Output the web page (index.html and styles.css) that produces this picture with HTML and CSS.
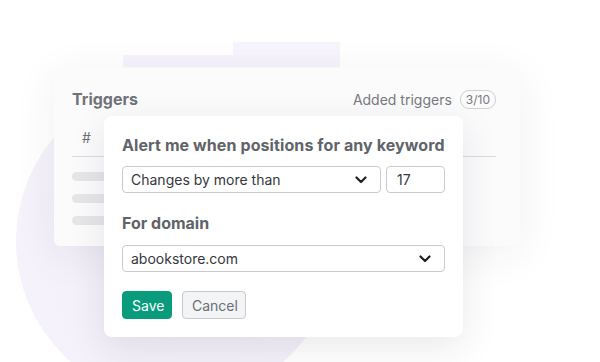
FILE: index.html
```html
<!DOCTYPE html>
<html lang="en">
<head>
<meta charset="utf-8">
<title>Triggers</title>
<link rel="stylesheet" href="styles.css">
</head>
<body>
<div class="stage">
  <div class="circle"></div>
  <div class="back-card">
    <div class="back-tab"></div>
    <div class="back-head"></div>
    <div class="back-body"></div>
  </div>
  <div class="triggers-card">
    <div class="tc-head">
      <span class="tc-title">Triggers</span>
      <span class="tc-added">Added triggers <span class="badge">3/10</span></span>
    </div>
    <div class="tc-cols"><span class="hash">#</span></div>
    <div class="tc-rows">
      <span class="bar"></span>
      <span class="bar"></span>
      <span class="bar"></span>
    </div>
  </div>
  <div class="modal">
    <div class="m-title">Alert me when positions for any keyword</div>
    <div class="m-row">
      <div class="select sel-change">
        <span>Changes by more than</span>
        <svg class="chev" width="12" height="8" viewBox="0 0 12 8"><path d="M1.5 1.5 L6 6 L10.5 1.5" fill="none" stroke="#1f2024" stroke-width="2.2" stroke-linecap="round" stroke-linejoin="round"/></svg>
      </div>
      <div class="input">17</div>
    </div>
    <div class="m-label">For domain</div>
    <div class="select sel-domain">
      <span>abookstore.com</span>
      <svg class="chev" width="12" height="8" viewBox="0 0 12 8"><path d="M1.5 1.5 L6 6 L10.5 1.5" fill="none" stroke="#1f2024" stroke-width="2.2" stroke-linecap="round" stroke-linejoin="round"/></svg>
    </div>
    <div class="m-actions">
      <button class="btn btn-save">Save</button>
      <button class="btn btn-cancel">Cancel</button>
    </div>
  </div>
</div>
</body>
</html>
```
FILE: styles.css
```css
* { box-sizing: border-box; }
html, body { margin: 0; padding: 0; background: #ffffff; }
body { font-family: Inter, "Noto Sans", sans-serif; }

.stage {
  position: relative;
  width: 600px;
  height: 362px;
  overflow: hidden;
  background: #ffffff;
}

.circle {
  position: absolute;
  left: 16px;
  top: 80px;
  width: 322px;
  height: 322px;
  border-radius: 50%;
  background: radial-gradient(circle at 60% 55%, #f2eefa 0%, #f4f1fa 60%, #f6f4fb 100%);
}

.back-card {
  position: absolute;
  left: 123px;
  top: 42px;
  width: 217px;
  height: 60px;
  display: flex;
  flex-direction: column;
}
.back-tab {
  margin-left: 110px;
  height: 13px;
  background: #f7f4fe;
}
.back-head {
  height: 12px;
  background: #f6f3fd;
}
.back-body {
  flex: 1;
  background: #fbfbfd;
}

.triggers-card {
  position: absolute;
  left: 54px;
  top: 68px;
  width: 466px;
  height: 178px;
  background: #fbfbfc;
  border-radius: 6px;
  box-shadow: 0 8px 44px rgba(40, 40, 60, 0.07);
  padding: 20px 24px 0 18px;
}
.tc-head {
  display: flex;
  justify-content: space-between;
  align-items: center;
  height: 22px;
}
.tc-title {
  font-size: 16px;
  font-weight: 700;
  color: #6f7279;
}
.tc-added {
  font-size: 14px;
  color: #77797f;
  display: flex;
  align-items: center;
  gap: 8px;
}
.badge {
  font-size: 12px;
  border: 1px solid #cfd0d4;
  border-radius: 9px;
  padding: 1px 5px;
  color: #77797f;
}
.tc-cols {
  margin-top: 19px;
  height: 28px;
  border-bottom: 1px solid #d9dade;
  padding-left: 10px;
  font-size: 14px;
  color: #6d7077;
}
.tc-rows {
  display: flex;
  flex-direction: column;
  gap: 13px;
  padding-top: 15px;
}
.bar {
  display: block;
  width: 60px;
  height: 9px;
  border-radius: 5px;
  background: #e6e6e9;
}

.modal {
  position: absolute;
  left: 104px;
  top: 116px;
  width: 359px;
  height: 221px;
  background: #ffffff;
  border-radius: 8px;
  box-shadow: 0 10px 36px rgba(40, 40, 60, 0.10);
  padding: 19px 18px 18px 18px;
  display: flex;
  flex-direction: column;
}
.m-title {
  font-size: 16px;
  font-weight: 700;
  line-height: 20px;
  color: #606369;
  letter-spacing: 0.1px;
}
.m-row {
  display: flex;
  gap: 5px;
  margin-top: 11px;
}
.select, .input {
  height: 27px;
  border: 1px solid #c9cacf;
  border-radius: 4px;
  display: flex;
  align-items: center;
  font-size: 14px;
  color: #35373c;
  background: #ffffff;
}
.select {
  justify-content: space-between;
  padding: 0 13px 0 8px;
}
.sel-change { width: 259px; }
.input { width: 59px; padding-left: 10px; }
.sel-domain { width: 323px; margin-top: 12px; }
.m-label {
  margin-top: 20px;
  font-size: 16px;
  font-weight: 700;
  line-height: 20px;
  color: #606369;
}
.m-actions {
  display: flex;
  gap: 10px;
  margin-top: 19px;
}
.btn {
  height: 28px;
  border-radius: 4px;
  font-family: Inter, "Noto Sans", sans-serif;
  font-size: 14px;
  padding: 0 9px;
  cursor: pointer;
}
.btn-save {
  width: 50px;
  background: #089c7c;
  border: 1px solid #089c7c;
  color: #ffffff;
}
.btn-cancel {
  width: 64px;
  background: #f3f4f6;
  border: 1px solid #c9cacf;
  color: #6b6e75;
}
```
